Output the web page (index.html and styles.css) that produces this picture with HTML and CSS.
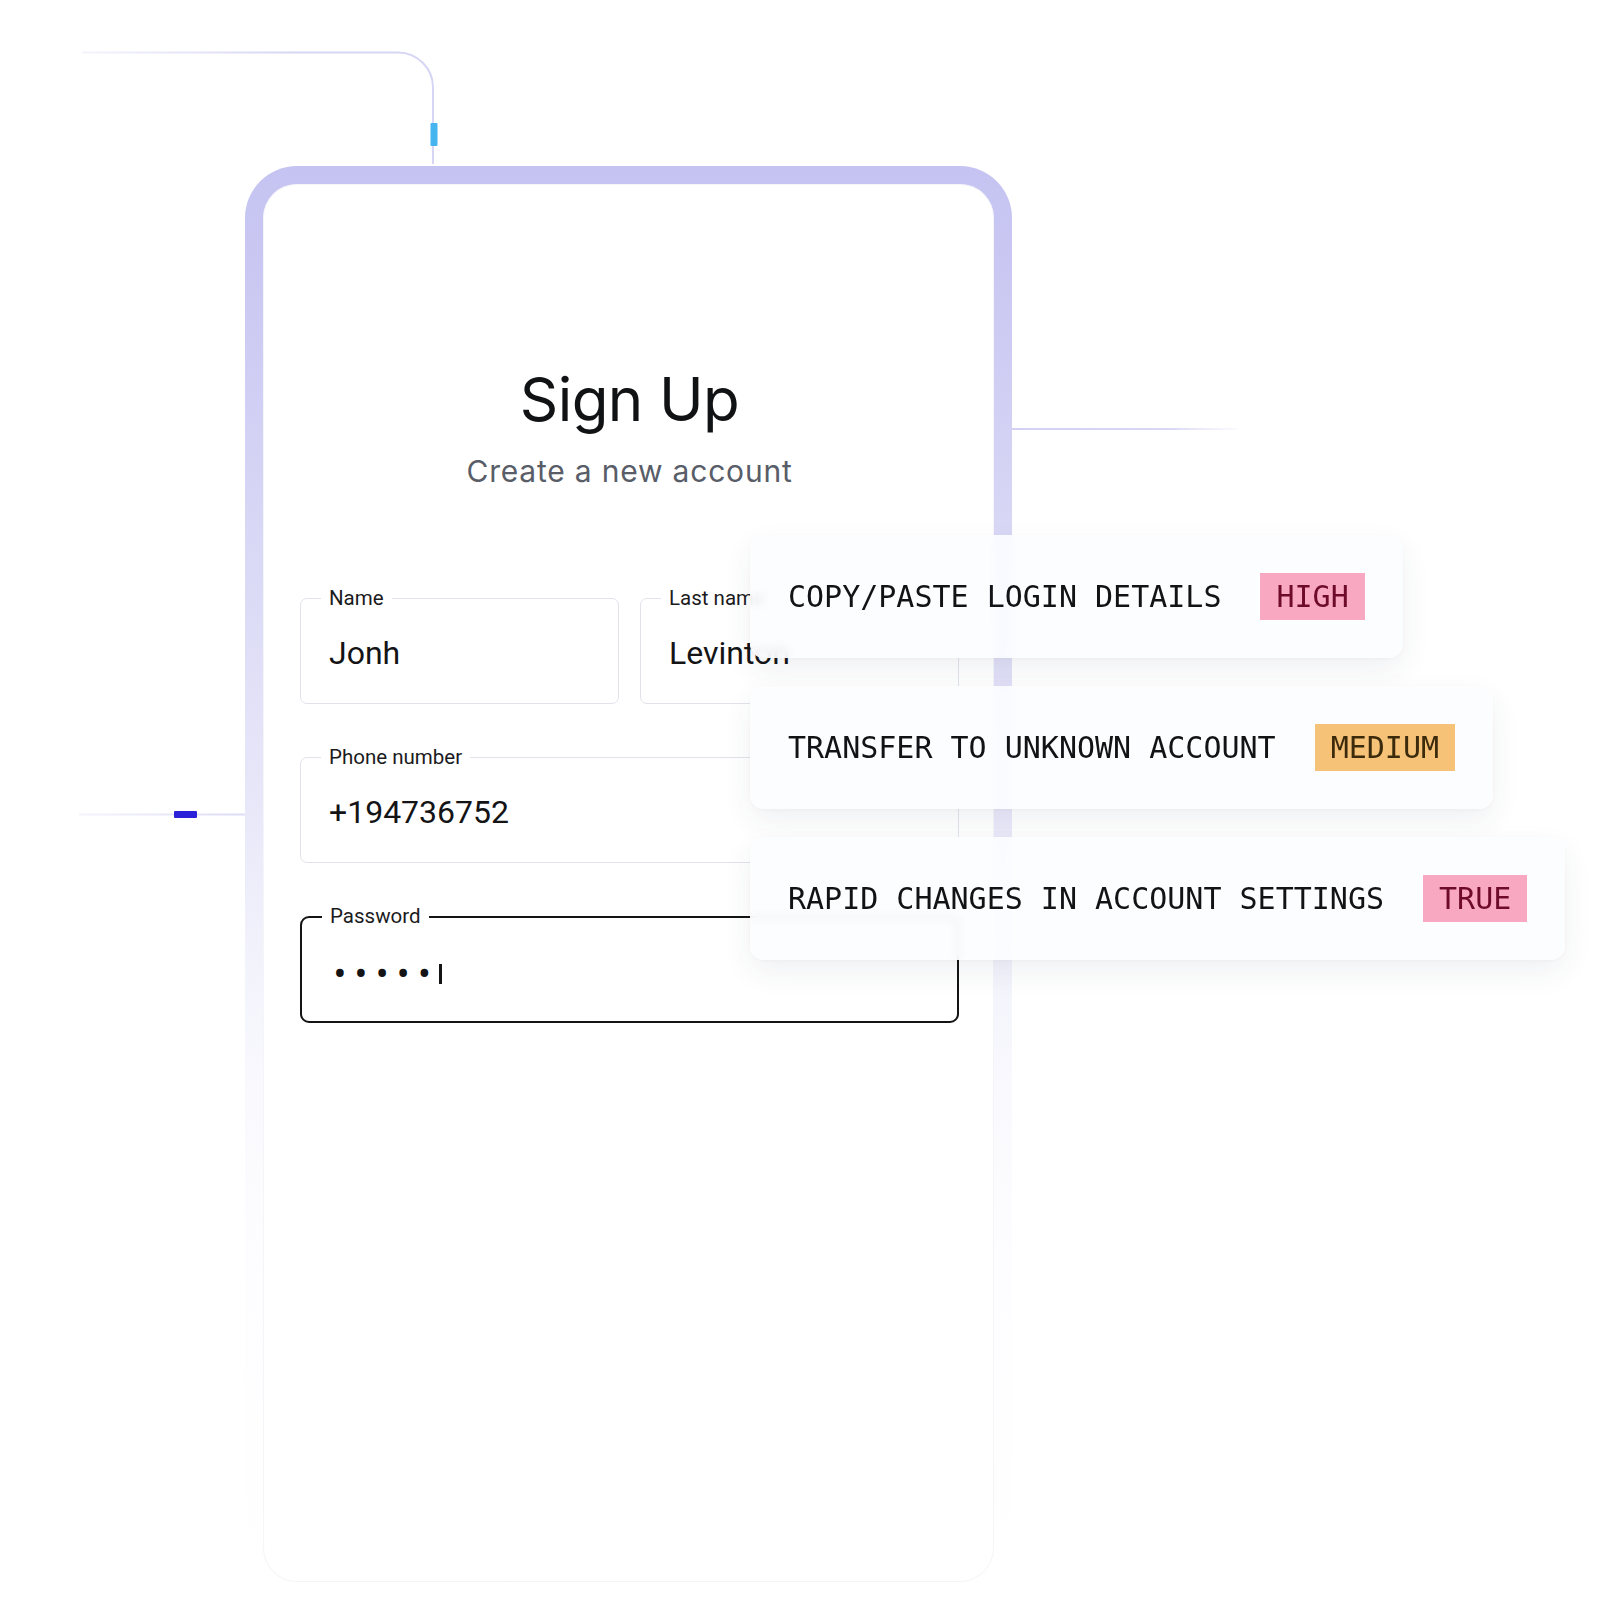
FILE: index.html
```html
<!DOCTYPE html>
<html lang="en">
<head>
<meta charset="utf-8">
<title>Sign Up</title>
<link rel="stylesheet" href="styles.css">
</head>
<body>
<div class="scene">
  <svg class="wires" width="1600" height="1601" viewBox="0 0 1600 1601" aria-hidden="true">
    <defs>
      <linearGradient id="fadeL" x1="82" y1="0" x2="300" y2="0" gradientUnits="userSpaceOnUse">
        <stop offset="0" stop-color="#d9d8f6" stop-opacity="0.3"/>
        <stop offset="1" stop-color="#d6d5f5"/>
      </linearGradient>
      <linearGradient id="fadeR" x1="1012" y1="0" x2="1237" y2="0" gradientUnits="userSpaceOnUse">
        <stop offset="0" stop-color="#d2d0f4"/>
        <stop offset="0.7" stop-color="#d8d7f5"/>
        <stop offset="1" stop-color="#e6e5f9" stop-opacity="0.2"/>
      </linearGradient>
      <linearGradient id="fadeLeft" x1="79" y1="0" x2="245" y2="0" gradientUnits="userSpaceOnUse">
        <stop offset="0" stop-color="#e3e2f8" stop-opacity="0.4"/>
        <stop offset="1" stop-color="#dcdbf6"/>
      </linearGradient>
    </defs>
    <path d="M82 52.5 H398 A35 35 0 0 1 433 87.5 V164" fill="none" stroke="url(#fadeL)" stroke-width="2"/>
    <path d="M433 87.5 V164" fill="none" stroke="#d6d5f5" stroke-width="2"/>
    <rect x="430.5" y="123" width="7" height="23" rx="1" fill="#45b5f0"/>
    <path d="M1012 429 H1237" fill="none" stroke="url(#fadeR)" stroke-width="2"/>
    <path d="M79 814.5 H246" fill="none" stroke="url(#fadeLeft)" stroke-width="2"/>
    <rect x="174" y="811" width="23" height="7" rx="1" fill="#2b21d9"/>
  </svg>

  <div class="phone">
    <div class="screen">
      <h1 class="title">Sign Up</h1>
      <p class="subtitle">Create a new account</p>
      <form class="form">
        <div class="row">
          <div class="field"><span class="label">Name</span><span class="value">Jonh</span></div>
          <div class="field"><span class="label">Last name</span><span class="value">Levinton</span></div>
        </div>
        <div class="field"><span class="label">Phone number</span><span class="value">+194736752</span></div>
        <div class="field field--active"><span class="label">Password</span><span class="value dots">•••••<i class="caret"></i></span></div>
      </form>
    </div>
  </div>

  <div class="alerts">
    <div class="alert"><span class="alert__text">COPY/PASTE LOGIN DETAILS</span><span class="badge badge--pink">HIGH</span></div>
    <div class="alert"><span class="alert__text">TRANSFER TO UNKNOWN ACCOUNT</span><span class="badge badge--orange">MEDIUM</span></div>
    <div class="alert"><span class="alert__text">RAPID CHANGES IN ACCOUNT SETTINGS</span><span class="badge badge--pink">TRUE</span></div>
  </div>
</div>
</body>
</html>
```

FILE: styles.css
```css
html, body {
  margin: 0;
  background: #ffffff;
}

.scene {
  position: relative;
  width: 1600px;
  height: 1601px;
  overflow: hidden;
  box-sizing: border-box;
  padding: 166px 0 0 245px;
}

.wires {
  position: absolute;
  left: 0;
  top: 0;
}

.phone {
  position: relative;
  width: 767px;
  height: 1434px;
  box-sizing: border-box;
  padding: 18px;
  border-radius: 52px;
  background: linear-gradient(180deg, #c5c3f1 0%, #cfcdf3 14%, #dcdbf6 30%, #e8e7f9 44%, #f3f3fc 56%, #fafafe 66%, #fdfdff 76%, #ffffff 100%);
}

.screen {
  height: 100%;
  box-sizing: border-box;
  background: #ffffff;
  border-radius: 34px;
  box-shadow: inset 0 0 0 1px rgba(236, 238, 245, 0.6);
  padding: 179px 35px 0 37px;
  text-align: center;
  font-family: Inter, "Noto Sans", sans-serif;
}

.title {
  margin: 0;
  font-size: 60px;
  line-height: 72px;
  font-weight: 400;
  color: #111214;
  letter-spacing: -0.6px;
}

.subtitle {
  margin: 19px 0 0;
  font-size: 30px;
  line-height: 34px;
  color: #585d68;
  letter-spacing: 0.8px;
}

.form {
  margin-top: 110px;
  display: flex;
  flex-direction: column;
  gap: 53px;
  text-align: left;
  font-family: Roboto, "Liberation Sans", sans-serif;
}

.row {
  display: grid;
  grid-template-columns: 1fr 1fr;
  gap: 21px;
}

.field {
  position: relative;
  height: 106px;
  box-sizing: border-box;
  border: 1.5px solid #e2e3ea;
  border-radius: 7px;
  display: flex;
  align-items: center;
  padding: 4px 0 0 28px;
}

.field--active {
  height: 107px;
  border: 2px solid #141414;
  border-radius: 9px;
  padding-top: 0;
}

.label {
  position: absolute;
  left: 20px;
  top: -13.5px;
  padding: 0 8px;
  background: #ffffff;
  font-size: 20.5px;
  line-height: 24px;
  color: #1b1b1d;
}

.field--active .label {
  top: -14px;
}

.value {
  font-size: 32px;
  color: #141416;
  white-space: nowrap;
}

.dots {
  display: flex;
  align-items: center;
  font-size: 38px;
  letter-spacing: 8.3px;
  margin: 9px 0 0 3.5px;
}

.caret {
  display: inline-block;
  width: 2.5px;
  height: 20px;
  background: #141414;
  margin-left: 0;
}

.alerts {
  position: absolute;
  left: 750px;
  top: 535px;
  display: flex;
  flex-direction: column;
  align-items: flex-start;
  gap: 28px;
}

.alert {
  display: flex;
  align-items: center;
  gap: 39px;
  padding: 38px;
  border-radius: 14px;
  background: rgba(252, 253, 255, 0.9);
  backdrop-filter: blur(5px);
  box-shadow: 0 12px 30px rgba(40, 50, 90, 0.07), 0 1px 4px rgba(40, 50, 90, 0.04);
  font-family: "DejaVu Sans Mono", "Liberation Mono", monospace;
  font-size: 30px;
  line-height: 47px;
  color: #121316;
  white-space: nowrap;
}

.badge {
  display: block;
  height: 47px;
  padding: 0 16px;
}

.badge--pink {
  background: #f9a8c1;
  color: #6e0b2c;
}

.badge--orange {
  background: #f5c278;
  color: #3b2a0c;
}
```
